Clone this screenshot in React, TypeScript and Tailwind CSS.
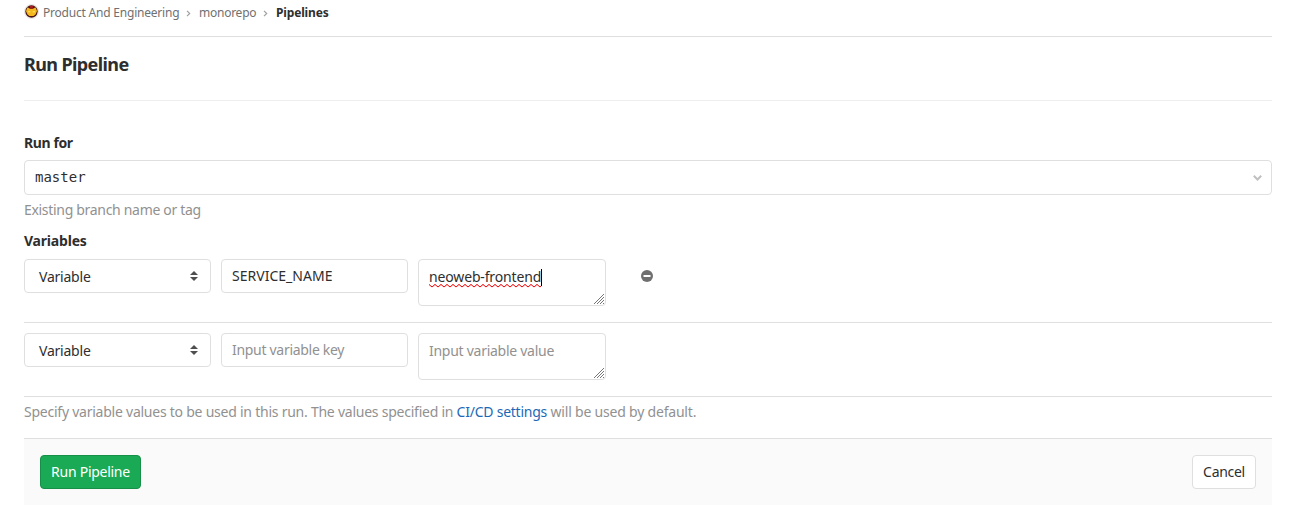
import React from "react";

function UpDown() {
  return (
    <svg width="8" height="10" viewBox="0 0 8 10" fill="#4f4f4f">
      <path d="M4 0 8 4H0z" />
      <path d="M0 6h8L4 10z" />
    </svg>
  );
}

function Grip() {
  return (
    <svg className="absolute bottom-px right-px" width="10" height="10" viewBox="0 0 10 10" stroke="#777777" strokeWidth="1" fill="none">
      <path d="M0 10 10 0M3 10 10 3M6 10 10 6M9 10 10 9" />
    </svg>
  );
}

function Squiggle() {
  return (
    <svg className="absolute left-0 top-[17px]" width="112" height="4">
      <defs>
        <pattern id="wave" width="6" height="4" patternUnits="userSpaceOnUse">
          <path d="M-1 1.500 0 .5 3 3 6 .5 7 1.500" stroke="#f00000" strokeWidth="1" fill="none" />
        </pattern>
      </defs>
      <rect width="112" height="4" fill="url(#wave)" />
    </svg>
  );
}

function Crumb() {
  return (
    <svg width="5" height="7" viewBox="0 0 5 7" fill="none" stroke="#a0a0a0" strokeWidth="1.2">
      <path d="M1 .8 3.700 3.500 1 6.200" />
    </svg>
  );
}

function Avatar() {
  return (
    <svg width="15" height="15" viewBox="0 0 15 15">
      <circle cx="7.5" cy="7.5" r="7" fill="#fff" stroke="#e5e5e5" />
      <circle cx="7.5" cy="7.500" r="6.200" fill="#4a1714" />
      <path d="M3.500 3.200 6 4.800h3l2.500-1.600L13 7l-1.500 3.500L9.500 12h-4l-2-1.500L2 7z" fill="#f5b81c" />
      <path d="M5.500 1.800h4L8.500 4.800h-2z" fill="#a51d20" />
      <path d="M4 7.800h2.300M8.700 7.800H11" stroke="#ffe66b" strokeWidth="1" />
    </svg>
  );
}

const box = "rounded-[4px] border border-[#dfdfdf] bg-white";

function Row({ name, value, removable }: { name?: string; value?: string; removable?: boolean }) {
  return (
    <div className="flex h-[74px] items-start border-b border-[#dfdfdf] pt-[10px]">
      <div className={`${box} mr-[10px] flex h-[34px] w-[187px] items-center justify-between pl-[14px] pr-3`}>
        <span className="mt-0.5 tracking-[-0.22px]">Variable</span>
        <UpDown />
      </div>
      <div className={`${box} mr-[10px] flex h-[34px] w-[187px] items-center pl-[10px]`}>
        {name ? <span className="tracking-[0.02px]">{name}</span> : <span className="tracking-[-0.3px] text-[#919191]">Input variable key</span>}
      </div>
      <div className={`${box} relative h-[47px] w-[188px] pl-[10px] pt-[7px]`}>
        {value ? (
          <span className="relative inline-flex h-5 items-center tracking-[-0.15px]">
            {value}
            <Squiggle />
            <span className="absolute left-[112px] top-0.5 h-[17px] w-px bg-black" />
          </span>
        ) : (
          <span className="tracking-[-0.27px] text-[#919191]">Input variable value</span>
        )}
        <Grip />
      </div>
      {removable && (
        <svg className="ml-[35px] mt-[11px]" width="12" height="12" viewBox="0 0 12 12">
          <circle cx="6" cy="6" r="6" fill="#707070" />
          <path d="M2.500 5h7v2h-7z" fill="#fff" />
        </svg>
      )}
    </div>
  );
}

export default function App() {
  return (
    <main className="min-h-[514px] bg-white pl-6 pr-[33px] font-['Noto_Sans',sans-serif] text-sm leading-5 text-[#2e2e2e]">
      <nav className="flex h-[37px] items-start border-b border-[#dfdfdf] pt-[3px] text-xs leading-5 text-[#707070]">
        <span className="mt-[1px] mr-1 h-[15px]"><Avatar /></span>
        <span className="w-[137px] whitespace-nowrap tracking-[-0.21px]">Product And Engineering</span>
        <span className="ml-[6px] mt-[7px] mr-2 flex"><Crumb /></span>
        <span className="w-[58px] tracking-[-0.25px]">monorepo</span>
        <span className="ml-[6px] mt-[7px] mr-2 flex"><Crumb /></span>
        <span className="font-bold tracking-[-0.15px] text-[#2e2e2e]">Pipelines</span>
      </nav>
      <h1 className="flex h-16 items-start border-b border-[#eeeeee] pt-[15px] text-lg leading-6 font-bold">
        <span className="tracking-[-0.6px]">Run Pipeline</span>
      </h1>
      <div className="flex h-[59px] items-end pb-[7px] font-bold"><span className="tracking-[-0.4px]">Run for</span></div>
      <div className={`${box} flex h-[35px] items-center justify-between pl-[10px] pr-[9px]`}>
        <span className="mb-0.5 font-['DejaVu_Sans_Mono',monospace]">master</span>
        <svg width="9" height="6" viewBox="0 0 9 6" fill="none" stroke="#c0c0c0" strokeWidth="2">
          <path d="M.8.800 4.500 4.500 8.200.800" />
        </svg>
      </div>
      <div className="h-[31px] pt-[5px] text-[#919191]"><span className="tracking-[-0.31px]">Existing branch name or tag</span></div>
      <div className="h-[23px] pt-[5px] font-bold"><span className="tracking-[-0.2px]">Variables</span></div>
      <Row name="SERVICE_NAME" value="neoweb-frontend" removable />
      <Row />
      <p className="h-[41px] pt-[5px] text-[#919191]">
        <span className="tracking-[-0.24px]">Specify variable values to be used in this run. The values specified in <a className="text-[#1b69b6]">CI/CD settings</a><span className="tracking-[-0.2px]"> will be used by default.</span></span>
      </p>
      <footer className="flex h-[67px] items-start justify-between border-t border-[#dfdfdf] bg-[#fafafa] p-4">
        <button className="h-[34px] w-[101px] rounded-[4px] border border-[#168f48] bg-[#1aaa55] text-white"><span className="tracking-[-0.27px]">Run Pipeline</span></button>
        <button className={`${box} h-[34px] w-16`}><span className="tracking-[-0.3px]">Cancel</span></button>
      </footer>
    </main>
  );
}
